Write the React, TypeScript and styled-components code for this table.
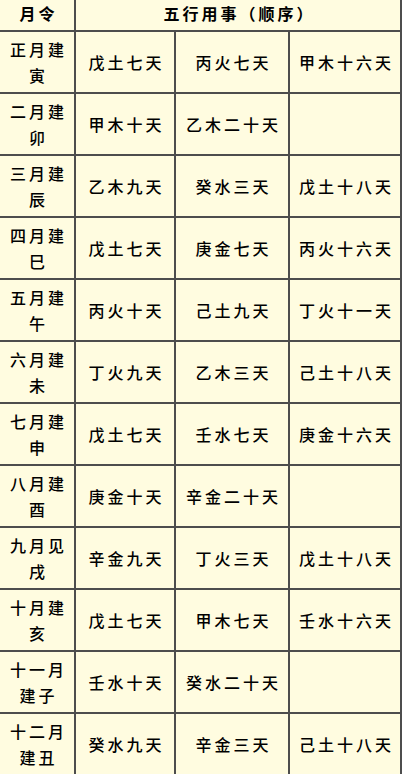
import styled, { createGlobalStyle } from "styled-components";

const GlobalStyle = createGlobalStyle`
  html, body {
    margin: 0;
    padding: 0;
    background: #fffce0;
  }
`;

const rows: { month: string[]; items: string[] }[] = [
  { month: ["正月建", "寅"], items: ["戊土七天", "丙火七天", "甲木十六天"] },
  { month: ["二月建", "卯"], items: ["甲木十天", "乙木二十天", ""] },
  { month: ["三月建", "辰"], items: ["乙木九天", "癸水三天", "戊土十八天"] },
  { month: ["四月建", "巳"], items: ["戊土七天", "庚金七天", "丙火十六天"] },
  { month: ["五月建", "午"], items: ["丙火十天", "己土九天", "丁火十一天"] },
  { month: ["六月建", "未"], items: ["丁火九天", "乙木三天", "己土十八天"] },
  { month: ["七月建", "申"], items: ["戊土七天", "壬水七天", "庚金十六天"] },
  { month: ["八月建", "酉"], items: ["庚金十天", "辛金二十天", ""] },
  { month: ["九月见", "戌"], items: ["辛金九天", "丁火三天", "戊土十八天"] },
  { month: ["十月建", "亥"], items: ["戊土七天", "甲木七天", "壬水十六天"] },
  { month: ["十一月", "建子"], items: ["壬水十天", "癸水二十天", ""] },
  { month: ["十二月", "建丑"], items: ["癸水九天", "辛金三天", "己土十八天"] },
];

const Table = styled.div`
  display: grid;
  grid-template-columns: 74px 98px 112px 110px;
  grid-auto-rows: 60px;
  grid-template-rows: 30px;
  gap: 2px;
  padding-right: 2px;
  width: 402px;
  background: #4d4d4d;
  font-family: "Noto Sans CJK SC", "Noto Sans", sans-serif;
  color: #000;
`;

const Cell = styled.div<{ $span?: number }>`
  grid-column: span ${({ $span }) => $span || 1};
  background: #fffce0;
  display: flex;
  flex-direction: column;
  align-items: center;
  justify-content: center;
  font-size: 16px;
  font-weight: 500;
  line-height: 26px;
  letter-spacing: 3px;
  padding-left: 3px;
  white-space: nowrap;
`;

const HeadCell = styled(Cell)`
  padding-bottom: 5px;
  line-height: 20px;
  font-weight: 600;
`;

export default function App() {
  return (
    <>
      <GlobalStyle />
      <Table>
        <HeadCell>月令</HeadCell>
        <HeadCell $span={3}>五行用事（顺序）</HeadCell>
        {rows.map((row) => [
          <Cell key={row.month.join("") + "m"}>
            {row.month.map((line) => (
              <span key={line}>{line}</span>
            ))}
          </Cell>,
          ...row.items.map((item, i) => (
            <Cell key={row.month.join("") + i}>{item}</Cell>
          )),
        ])}
      </Table>
    </>
  );
}
